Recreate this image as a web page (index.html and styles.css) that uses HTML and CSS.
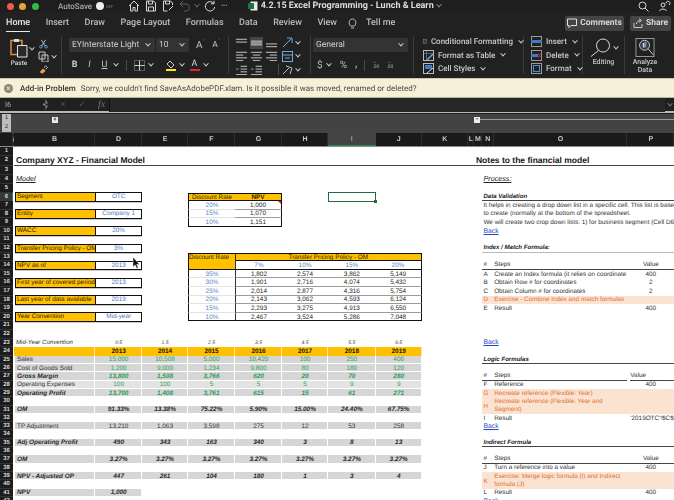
FILE: index.html
```html
<!DOCTYPE html>
<html>
<head>
  <meta charset="utf-8">
  <title>4.2.15 Excel Programming - Lunch &amp; Learn</title>
  <link rel="stylesheet" href="styles.css">
</head>
<body>
  <div class="titlebar">
    <span class="light red"></span><span class="light amber"></span><span class="light green"></span>
    <span class="autosave">AutoSave</span>
    <span class="toggle"><i></i>OFF</span>
    <svg class="qa" width="12" height="12" viewBox="0 0 12 12"><path d="M1 6l5-5 5 5M2.500 5v6h2.500V7.500h2V11h2.500V5" fill="none" stroke="#d8d8d8"/></svg>
    <svg class="qa" width="12" height="12" viewBox="0 0 12 12"><path d="M1.500 1h7l2 2v8h-9zM3.500 1v3h4V1M3.500 11V7h5v4" fill="none" stroke="#d8d8d8"/></svg>
    <svg class="qa" width="12" height="12" viewBox="0 0 12 12"><path d="M1.500 1h7l2 2v2M1.500 1v10h4M3.500 1v3h4V1M7 10l4-4" fill="none" stroke="#d8d8d8"/></svg>
    <svg class="qa" width="12" height="12" viewBox="0 0 12 12"><path d="M4 1L1 4l3 3M1 4h6a3.500 3.500 0 0 1 0 7H5" fill="none" stroke="#5c5c5c"/></svg>
    <span class="caret dim-caret"></span>
    <svg class="qa" width="12" height="12" viewBox="0 0 12 12"><path d="M9.800 3.500A4.700 4.700 0 1 0 10.700 7M10 .8v3H7" fill="none" stroke="#d8d8d8"/></svg>
    <span class="more">&#8226;&#8226;&#8226;</span>
    <svg class="xl" width="10" height="10" viewBox="0 0 10 10"><rect x="2.500" y=".5" width="7" height="9" fill="#e8f0ea"/><rect y="2" width="6" height="6" rx=".5" fill="#1f7244"/></svg>
    <span class="doc">4.2.15 Excel Programming - Lunch &amp; Learn</span>
    <span class="caret doc-caret"></span>
    <svg class="search" width="11" height="11" viewBox="0 0 11 11"><circle cx="4.500" cy="4.500" r="3.500" fill="none" stroke="#d8d8d8"/><path d="M7 7l3.500 3.500" stroke="#d8d8d8"/></svg>
    <svg class="person" width="12" height="12" viewBox="0 0 12 12"><circle cx="4" cy="5" r="2" fill="none" stroke="#d8d8d8"/><path d="M.5 11c.5-2.500 6.500-2.500 7 0M7 3.500a2 2 0 1 1 3 1.500" fill="none" stroke="#d8d8d8"/></svg>
  </div>

  <div class="tabs">
    <span class="tab on">Home</span>
    <span class="tab">Insert</span>
    <span class="tab">Draw</span>
    <span class="tab">Page Layout</span>
    <span class="tab">Formulas</span>
    <span class="tab">Data</span>
    <span class="tab">Review</span>
    <span class="tab">View</span>
    <svg class="bulb" width="9" height="11" viewBox="0 0 9 11"><path d="M2.500 8C.5 6 .5 1 4.500 1s4 5 2 7zM3 10h3" fill="none" stroke="#bbb"/></svg>
    <span class="tab tell">Tell me</span>
    <span class="btn comments">
      <svg width="10" height="10" viewBox="0 0 10 10"><path d="M.5 1h9v6.500H4L2 9.500v-2H.5z" fill="none" stroke="#e0e0e0"/></svg>Comments
    </span>
    <span class="btn share">
      <svg width="10" height="10" viewBox="0 0 10 10"><path d="M1 5v4.500h8V6M3.500 6c0-2.500 2-3.500 4-3.500M6 .5l2.500 2L6 4.500" fill="none" stroke="#c8c8c8"/></svg>Share
    </span>
  </div>

  <div class="ribbon">
    <div class="group clip">
      <div class="paste">
        <svg width="18" height="20" viewBox="0 0 18 20"><path d="M1 2.500h11v14H1z" fill="none" stroke="#e08a3c" stroke-width="1.500"/><path d="M4 1h5v3H4z" fill="#d9d9d9"/><path d="M7.500 7.500h9.500v11.500H7.500z" fill="#2a2a2a" stroke="#e5e5e5"/></svg>
        <span>Paste</span>
      </div>
      <span class="caret paste-caret"></span>
      <div class="clip-tools">
        <svg width="11" height="11" viewBox="0 0 11 11"><circle cx="2.500" cy="9" r="1.500" fill="none" stroke="#6fa8dc"/><circle cx="8.500" cy="9" r="1.500" fill="none" stroke="#6fa8dc"/><path d="M3.500 8L8 1M7.500 8L3 1" stroke="#cfcfcf" fill="none"/></svg>
        <div class="tool-line">
          <svg width="11" height="11" viewBox="0 0 11 11"><path d="M1 1h6v7H1zM4 4h6v7H4z" fill="#262626" stroke="#c8c8c8"/></svg>
          <span class="caret"></span>
        </div>
        <svg width="11" height="11" viewBox="0 0 11 11"><path d="M1 8l4-4 3 3-4 3z" fill="#e9a23b"/><path d="M6 3l2-2 2 2-2 2" fill="none" stroke="#ddd"/></svg>
      </div>
    </div>

    <div class="group font">
      <div class="line">
        <span class="select font-name">EYInterstate Light<span class="caret"></span></span>
        <span class="select font-size">10<span class="caret"></span></span>
        <span class="grow">A<sup>&#710;</sup></span>
        <span class="grow small">A<sup>&#711;</sup></span>
      </div>
      <div class="line low">
        <b class="fmt">B</b>
        <i class="fmt">I</i>
        <u class="fmt">U</u>
        <span class="caret"></span>
        <span class="vsep"></span>
        <svg width="11" height="11" viewBox="0 0 11 11"><path d="M.5.5h10v10H.5z" fill="none" stroke="#8f8f8f" stroke-dasharray="1 1"/><path d="M.5 5.500h10M5.500.5v10" stroke="#cfcfcf"/></svg>
        <span class="caret"></span>
        <span class="swatch fill">
          <svg width="10" height="8" viewBox="0 0 10 8"><path d="M1 4l3-3 4 4-3 3z" fill="none" stroke="#cfcfcf"/></svg>
          <i class="bar yellow"></i>
        </span>
        <span class="caret"></span>
        <span class="swatch letter">A<i class="bar redbar"></i></span>
        <span class="caret"></span>
      </div>
    </div>

    <div class="group align">
      <div class="align-grid">
        <svg class="al" viewBox="0 0 14 10"><path d="M1 1h12M1 4h12" stroke="#cfcfcf"/></svg>
        <span class="al sel"><svg viewBox="0 0 14 10"><path d="M1 3h12M1 5h12M1 7h12" stroke="#dedede"/></svg></span>
        <svg class="al" viewBox="0 0 14 10"><path d="M1 6h12M1 9h12" stroke="#cfcfcf"/></svg>
        <span class="al-end"><svg width="11" height="11" viewBox="0 0 11 11"><path d="M1 10l8-8M5 1h5v5" fill="none" stroke="#6fa8dc"/></svg><span class="caret"></span></span>
        <svg class="al" viewBox="0 0 14 10"><path d="M1 1h12M1 4h8M1 7h12M1 10h8" stroke="#cfcfcf"/></svg>
        <svg class="al" viewBox="0 0 14 10"><path d="M1 1h12M3 4h8M1 7h12M3 10h8" stroke="#cfcfcf"/></svg>
        <svg class="al" viewBox="0 0 14 10"><path d="M1 1h12M5 4h8M1 7h12M5 10h8" stroke="#cfcfcf"/></svg>
        <span class="al-end"><svg width="11" height="11" viewBox="0 0 11 11"><rect x=".5" y=".5" width="10" height="10" fill="none" stroke="#6fa8dc"/><path d="M.5 4h10M3 7h5" stroke="#6fa8dc"/></svg><span class="caret"></span></span>
        <svg class="al" viewBox="0 0 14 10"><path d="M6 1h7M6 4h7M6 7h7M1 10h12" stroke="#cfcfcf"/><path d="M4 4H1" stroke="#6fa8dc"/></svg>
        <svg class="al" viewBox="0 0 14 10"><path d="M6 1h7M6 4h7M6 7h7M1 10h12" stroke="#cfcfcf"/><path d="M1 4h3" stroke="#6fa8dc"/></svg>
        <span class="vsep wide"></span>
        <span class="al-end"><svg width="11" height="11" viewBox="0 0 11 11"><path d="M1 10l6-6M4 2l6 2-2 6" fill="none" stroke="#bdbdbd"/></svg><span class="caret"></span></span>
      </div>
    </div>

    <div class="group number">
      <span class="select general">General<span class="caret"></span></span>
      <div class="line low num-tools">
        <span class="sym">$</span><span class="caret"></span>
        <span class="sym pct">%</span>
        <b class="sym comma">,</b>
        <span class="vsep"></span>
        <span class="dec"><em>&#8592;</em>.00</span>
        <span class="dec"><em>&#8594;</em>.00</span>
      </div>
    </div>

    <div class="group stack styles">
      <div class="cmd">
        <svg width="11" height="11" viewBox="0 0 11 11"><rect x=".5" y=".5" width="10" height="10" fill="none" stroke="#b9b9b9"/><path d="M3.500 1v9M7.500 1v9" stroke="#8a8a8a" stroke-width=".6"/><path d="M4 2h3v2H4zM4 7h3v2H4z" fill="#d0282c"/></svg>
        <span>Conditional Formatting</span><span class="caret"></span>
      </div>
      <div class="cmd">
        <svg width="11" height="11" viewBox="0 0 11 11"><rect x=".5" y=".5" width="10" height="10" fill="none" stroke="#b9b9b9"/><path d="M.5 3.500h10M3.500 1v9" stroke="#8a8a8a" stroke-width=".6"/><path d="M4 10l6-6" stroke="#6fa8dc" stroke-width="1.500"/></svg>
        <span>Format as Table</span><span class="caret"></span>
      </div>
      <div class="cmd">
        <svg width="11" height="11" viewBox="0 0 11 11"><rect x=".5" y=".5" width="10" height="10" fill="none" stroke="#b9b9b9"/><path d="M2 2h7v4H2z" fill="#3d7cc4"/><path d="M4 10l6-5" stroke="#dcdcdc"/></svg>
        <span>Cell Styles</span><span class="caret"></span>
      </div>
    </div>

    <div class="group stack cells">
      <div class="cmd">
        <svg width="11" height="11" viewBox="0 0 11 11"><rect x=".5" y=".5" width="10" height="10" fill="none" stroke="#9a9a9a"/><path d="M0 4h11v3H0z" fill="#3d7cc4"/></svg>
        <span>Insert</span><span class="caret"></span>
      </div>
      <div class="cmd">
        <svg width="11" height="11" viewBox="0 0 11 11"><rect x=".5" y=".5" width="10" height="10" fill="none" stroke="#9a9a9a"/><path d="M0 4h7v3H0z" fill="#3d7cc4"/><path d="M7 3.500l3 4M10 3.500l-3 4" stroke="#d0282c"/></svg>
        <span>Delete</span><span class="caret"></span>
      </div>
      <div class="cmd">
        <svg width="11" height="11" viewBox="0 0 11 11"><rect x=".5" y=".5" width="10" height="10" fill="none" stroke="#9a9a9a"/><rect x="2.500" y="2.500" width="6" height="6" fill="none" stroke="#4c8fd8"/></svg>
        <span>Format</span><span class="caret"></span>
      </div>
    </div>

    <div class="group big editing">
      <div class="line">
        <svg width="21" height="19" viewBox="0 0 21 19"><circle cx="13" cy="7.500" r="6.500" fill="none" stroke="#dcdcdc"/><path d="M8.500 12.500L1 18.500" stroke="#dcdcdc"/></svg>
        <span class="caret"></span>
      </div>
      <span>Editing</span>
    </div>

    <div class="group big analyze">
      <svg width="20" height="20" viewBox="0 0 21 21"><rect x=".5" y=".5" width="20" height="20" fill="none" stroke="#a0a0a0"/><circle cx="10" cy="8" r="5.500" fill="#3a3a3a" stroke="#d5d5d5"/><path d="M8 5.500h2v5H8z" fill="#d8d8d8"/><path d="M10 4h2v6.500h-2z" fill="#5b8fd0"/><path d="M14 12l6 7" stroke="#d5d5d5"/></svg>
      <span>Analyze<br>Data</span>
    </div>
  </div>

  <div class="msgbar">
    <span class="msg-x">&#215;</span>
    <b>Add-in Problem</b>
    <span>Sorry, we couldn't find SaveAsAdobePDF.xlam. Is it possible it was moved, renamed or deleted?</span>
  </div>

  <div class="formula">
    <span class="name">I6</span>
    <span class="stepper"></span>
    <span class="fx-x">&#215;</span>
    <span class="fx-x">&#10003;</span>
    <em class="fx">fx</em>
    <span class="fx-input"></span>
    <span class="caret fx-caret"></span>
  </div>

  <div class="outline">
    <div class="levels"><span>1</span><span>2</span></div>
    <span class="outline-btn plus">+</span>
    <span class="outline-btn minus">&#8722;</span>
    <span class="outline-rule"></span>
  </div>

  <div class="colhead">
    <span class="corner"></span>
    <span class="ca">/</span>
    <span>B</span><span>D</span><span>E</span><span>F</span><span>G</span><span>H</span>
    <span class="cur">I</span>
    <span>J</span><span>K</span><span>L</span><span>M</span><span>N</span><span>O</span><span>P</span>
  </div>

  <div class="sheet">
    <div class="row r1"><span class="rh">1</span></div>

    <div class="row r2 ruled">
      <span class="rh">2</span>
      <span class="cell b heading">Company XYZ - Financial Model</span>
      <span class="cell m heading">Notes to the financial model</span>
    </div>

    <div class="row r3"><span class="rh">3</span></div>

    <div class="row r3">
      <span class="rh">4</span>
      <span class="cell b section">Model</span>
      <span class="cell n section">Process:</span>
    </div>

    <div class="row r3"><span class="rh">5</span></div>

    <div class="row">
      <span class="rh on">6</span>
      <span class="cell b lab">Segment</span><span class="cell d val">OTC</span>
      <span class="cell f tophead first">Discount Rate</span><span class="cell g tophead last">NPV</span>
      <span class="cell i selected"></span>
      <span class="cell n sub">Data Validation</span>
    </div>

    <div class="row">
      <span class="rh">7</span>
      <span class="cell f rate first">20%</span><span class="cell g num last flagged">1,000</span>
      <span class="cell n note">It helps in creating a drop down list in a specific cell. This list is based</span>
    </div>

    <div class="row">
      <span class="rh">8</span>
      <span class="cell b lab">Entity</span><span class="cell d val">Company 1</span>
      <span class="cell f rate first">15%</span><span class="cell g num last">1,070</span>
      <span class="cell n note">to create (normally at the bottom of the spreadsheet.</span>
    </div>

    <div class="row">
      <span class="rh">9</span>
      <span class="cell f rate first end">10%</span><span class="cell g num last end">1,151</span>
      <span class="cell n note">We will create two crop down lists: 1) for business segment (Cell D6)</span>
    </div>

    <div class="row">
      <span class="rh">10</span>
      <span class="cell b lab">WACC</span><span class="cell d val">20%</span>
      <span class="cell n link">Back</span>
    </div>

    <div class="row"><span class="rh">11</span></div>

    <div class="row">
      <span class="rh">12</span>
      <span class="cell b lab">Transfer Pricing Policy - OM</span><span class="cell d val">3%</span>
      <span class="cell n sub soft">Index / Match Formula:</span>
    </div>

    <div class="row">
      <span class="rh">13</span>
      <span class="cell f yel first topline">Discount Rate</span>
      <span class="cell gj yel center topline last sep-left underline">Transfer Pricing Policy - OM</span>
    </div>

    <div class="row">
      <span class="rh">14</span>
      <span class="cell b lab">NPV as of</span><span class="cell d val">2013</span>
      <span class="cell f yel first underline"></span>
      <span class="cell g rate underline sep-left">7%</span><span class="cell h rate underline">10%</span><span class="cell i rate underline">15%</span><span class="cell j rate underline last">20%</span>
      <span class="cell n steps">#</span><span class="cell o steps">Steps</span><span class="cell p steps center">Value</span>
    </div>

    <div class="row">
      <span class="rh">15</span>
      <span class="cell f rate first">35%</span>
      <span class="cell g num sep-left">1,802</span><span class="cell h num">2,574</span><span class="cell i num">3,862</span><span class="cell j num last">5,149</span>
      <span class="cell n note">A</span><span class="cell o note">Create an Index formula (it relies on coordinate</span><span class="cell p note center">400</span>
    </div>

    <div class="row">
      <span class="rh">16</span>
      <span class="cell b lab">First year of covered period</span><span class="cell d val">2013</span>
      <span class="cell f rate first">30%</span>
      <span class="cell g num sep-left">1,901</span><span class="cell h num">2,716</span><span class="cell i num">4,074</span><span class="cell j num last">5,432</span>
      <span class="cell n note">B</span><span class="cell o note">Obtain Row # for coordinates</span><span class="cell p note center">2</span>
    </div>

    <div class="row">
      <span class="rh">17</span>
      <span class="cell f rate first">25%</span>
      <span class="cell g num sep-left">2,014</span><span class="cell h num">2,877</span><span class="cell i num">4,316</span><span class="cell j num last">5,754</span>
      <span class="cell n note">C</span><span class="cell o note">Obtain Column # for coordinates</span><span class="cell p note center">2</span>
    </div>

    <div class="row">
      <span class="rh">18</span>
      <span class="cell b lab">Last year of data available</span><span class="cell d val">2019</span>
      <span class="cell f rate first">20%</span>
      <span class="cell g num sep-left">2,143</span><span class="cell h num">3,062</span><span class="cell i num">4,593</span><span class="cell j num last">6,124</span>
      <span class="cell n task">D</span><span class="cell o task">Exercise - Combine Index and match formulas</span>
    </div>

    <div class="row">
      <span class="rh">19</span>
      <span class="cell f rate first">15%</span>
      <span class="cell g num sep-left">2,293</span><span class="cell h num">3,275</span><span class="cell i num">4,913</span><span class="cell j num last">6,550</span>
      <span class="cell n note">E</span><span class="cell o note">Result</span><span class="cell p note center">400</span>
    </div>

    <div class="row">
      <span class="rh">20</span>
      <span class="cell b lab">Year Convention</span><span class="cell d val">Mid-year</span>
      <span class="cell f rate first end">10%</span>
      <span class="cell g num end sep-left">2,467</span><span class="cell h num end">3,524</span><span class="cell i num end">5,286</span><span class="cell j num last end">7,048</span>
    </div>

    <div class="row"><span class="rh">21</span></div>
    <div class="row"><span class="rh">22</span></div>

    <div class="row">
      <span class="rh">23</span>
      <span class="cell b tiny wide-tiny">Mid-Year Convention</span>
      <span class="cell d tiny center">0.5</span><span class="cell e tiny center">1.5</span><span class="cell f tiny center">2.5</span><span class="cell g tiny center">3.5</span><span class="cell h tiny center">4.5</span><span class="cell i tiny center">5.5</span><span class="cell j tiny center">6.5</span>
      <span class="cell n link">Back</span>
    </div>

    <div class="row">
      <span class="rh">24</span>
      <span class="cell b year"></span>
      <span class="cell d year">2013</span><span class="cell e year">2014</span><span class="cell f year">2015</span><span class="cell g year">2016</span><span class="cell h year">2017</span><span class="cell i year">2018</span><span class="cell j year">2019</span>
    </div>

    <div class="row lo">
      <span class="rh">25</span>
      <span class="cell b grey">Sales</span>
      <span class="cell d grey in">15,000</span><span class="cell e grey in">10,508</span><span class="cell f grey in">5,000</span><span class="cell g grey in">10,420</span><span class="cell h grey in">100</span><span class="cell i grey in">250</span><span class="cell j grey in">400</span>
      <span class="cell n sub">Logic Formulas</span>
    </div>

    <div class="row lo">
      <span class="rh">26</span>
      <span class="cell b grey">Cost of Goods Sold</span>
      <span class="cell d grey in">1,200</span><span class="cell e grey in">9,000</span><span class="cell f grey in">1,234</span><span class="cell g grey in">9,800</span><span class="cell h grey in">80</span><span class="cell i grey in">180</span><span class="cell j grey in">120</span>
    </div>

    <div class="row lo">
      <span class="rh">27</span>
      <span class="cell b grey total">Gross Margin</span>
      <span class="cell d grey in total">13,800</span><span class="cell e grey in total">1,508</span><span class="cell f grey in total">3,766</span><span class="cell g grey in total">620</span><span class="cell h grey in total">20</span><span class="cell i grey in total">70</span><span class="cell j grey in total">280</span>
      <span class="cell n steps">#</span><span class="cell o steps">Steps</span><span class="cell p steps off-left">Value</span>
    </div>

    <div class="row lo">
      <span class="rh">28</span>
      <span class="cell b pale">Operating Expenses</span>
      <span class="cell d pale in">100</span><span class="cell e pale in">100</span><span class="cell f pale in">5</span><span class="cell g pale in">5</span><span class="cell h pale in">5</span><span class="cell i pale in">9</span><span class="cell j pale in">9</span>
      <span class="cell n note">F</span><span class="cell o note">Reference</span><span class="cell p note center">400</span>
    </div>

    <div class="row lo">
      <span class="rh">29</span>
      <span class="cell b grey total">Operating Profit</span>
      <span class="cell d grey in total">13,700</span><span class="cell e grey in total">1,408</span><span class="cell f grey in total">3,761</span><span class="cell g grey in total">615</span><span class="cell h grey in total">15</span><span class="cell i grey in total">61</span><span class="cell j grey in total">271</span>
      <span class="cell n task">G</span><span class="cell o task">Recreate reference (Flexible: Year)</span>
    </div>

    <div class="row lo">
      <span class="rh">30</span>
      <span class="cell n task"></span><span class="cell o task">Recreate reference (Flexible: Year and</span>
    </div>

    <div class="row lo">
      <span class="rh">31</span>
      <span class="cell b grey total">OM</span>
      <span class="cell d grey total">91.33%</span><span class="cell e grey total">13.38%</span><span class="cell f grey total">75.22%</span><span class="cell g grey total">5.90%</span><span class="cell h grey total">15.00%</span><span class="cell i grey total">24.40%</span><span class="cell j grey total">67.75%</span>
      <span class="cell n task merged">H</span><span class="cell o task">Segment)</span>
    </div>

    <div class="row lo">
      <span class="rh">32</span>
      <span class="cell n note">I</span><span class="cell o note">Result</span><span class="cell p note clip-ref">'2019OTC'!$C$8</span>
    </div>

    <div class="row lo">
      <span class="rh">33</span>
      <span class="cell b grey plain">TP Adjustment</span>
      <span class="cell d grey plain">13,210</span><span class="cell e grey plain">1,063</span><span class="cell f grey plain">3,598</span><span class="cell g grey plain">275</span><span class="cell h grey plain">12</span><span class="cell i grey plain">53</span><span class="cell j grey plain">258</span>
      <span class="cell n link">Back</span>
    </div>

    <div class="row lo"><span class="rh">34</span></div>

    <div class="row lo">
      <span class="rh">35</span>
      <span class="cell b grey total">Adj Operating Profit</span>
      <span class="cell d grey total">490</span><span class="cell e grey total">343</span><span class="cell f grey total">163</span><span class="cell g grey total">340</span><span class="cell h grey total">3</span><span class="cell i grey total">8</span><span class="cell j grey total">13</span>
      <span class="cell n sub">Indirect Formula</span>
    </div>

    <div class="row lo"><span class="rh">36</span></div>

    <div class="row lo">
      <span class="rh">37</span>
      <span class="cell b grey total">OM</span>
      <span class="cell d grey total">3.27%</span><span class="cell e grey total">3.27%</span><span class="cell f grey total">3.27%</span><span class="cell g grey total">3.27%</span><span class="cell h grey total">3.27%</span><span class="cell i grey total">3.27%</span><span class="cell j grey total">3.27%</span>
      <span class="cell n steps">#</span><span class="cell o steps">Steps</span><span class="cell p steps center">Value</span>
    </div>

    <div class="row lo">
      <span class="rh">38</span>
      <span class="cell n note">J</span><span class="cell o note">Turn a reference into a value</span><span class="cell p note center">400</span>
    </div>

    <div class="row lo">
      <span class="rh">39</span>
      <span class="cell b grey total">NPV - Adjusted OP</span>
      <span class="cell d grey total">447</span><span class="cell e grey total">261</span><span class="cell f grey total">104</span><span class="cell g grey total">180</span><span class="cell h grey total">1</span><span class="cell i grey total">3</span><span class="cell j grey total">4</span>
      <span class="cell n task"></span><span class="cell o task">Exercise: Merge logic formula (I) and Indirect</span>
    </div>

    <div class="row lo">
      <span class="rh">40</span>
      <span class="cell n task merged">K</span><span class="cell o task">formula (J)</span>
    </div>

    <div class="row lo">
      <span class="rh">41</span>
      <span class="cell b grey total">NPV</span><span class="cell d grey total">1,000</span>
      <span class="cell n note">L</span><span class="cell o note">Result</span><span class="cell p note center">400</span>
    </div>

    <div class="row lo">
      <span class="rh">42</span>
      <span class="cell n link">Back</span>
    </div>

    <svg class="pointer" width="8" height="12" viewBox="0 0 8 12"><path d="M1 0v10l2.200-2 1.500 3.500 1.500-.7-1.500-3.300H7.500z" fill="#111" stroke="#fff" stroke-width=".5"/></svg>
  </div>
</body>
</html>
```

FILE: styles.css
```css
* {
  box-sizing: border-box;
}
html, body {
  margin: 0;
  height: 500px;
  overflow: hidden;
}
body {
  width: 674px;
  background: #212121;
  color: #d8d8d8;
  font-family: Roboto, sans-serif;
  font-size: 8px;
  text-rendering: geometricPrecision;
  filter: blur(.3px);
}

/* title bar */
.titlebar {
  height: 12px;
  display: flex;
  align-items: center;
  padding-left: 6.500px;
  background: #1e1e1e;
}
.light {
  width: 7px;
  height: 7px;
  border-radius: 50%;
  margin-right: 5.500px;
}
.red { background: #ec5a50; }
.amber { background: #e8a52e; }
.green { background: #35b94a; }
.autosave {
  margin-left: 14px;
  font-size: 8px;
  font-weight: 500;
  color: #a9a9a9;
}
.toggle {
  display: flex;
  align-items: center;
  gap: 2px;
  margin-left: 4px;
  width: 20px;
  font-size: 4px;
  color: #888;
}
.toggle i {
  width: 8px;
  height: 8px;
  border-radius: 50%;
  background: #eee;
}
.qa {
  margin-left: 5px;
}
.toggle + .qa {
  margin-left: 12px;
}
.dim-caret {
  margin-left: 4px;
  opacity: .4;
}
.more {
  margin-left: 5px;
  font-size: 5px;
  letter-spacing: .5px;
}
.xl {
  margin-left: 20px;
}
.doc {
  margin-left: 3px;
  font-size: 9px;
  font-weight: 700;
  color: #dcdcdc;
  white-space: nowrap;
}
.doc-caret {
  margin-left: 3px;
  opacity: .6;
}
.search {
  margin-left: auto;
}
.person {
  margin: 0 3px 0 10px;
}

/* carets are small rotated corners */
.caret {
  display: inline-block;
  flex: none;
  width: 4px;
  height: 4px;
  border-right: 1px solid #d0d0d0;
  border-bottom: 1px solid #d0d0d0;
  transform: rotate(45deg) translate(-1px, -1px);
}

/* tabs */
.tabs {
  height: 22px;
  display: flex;
  align-items: center;
  padding-left: 6px;
  gap: 15.500px;
}
.tab {
  font-size: 9px;
  font-weight: 500;
  color: #bcbcbc;
  padding: 3px 0;
  white-space: nowrap;
}
.tab.on {
  color: #e8e8e8;
  border-bottom: 1px solid #e8e8e8;
}
.bulb {
  margin: 0 -7px 0 -4px;
}
.btn {
  display: flex;
  align-items: center;
  justify-content: center;
  gap: 3px;
  height: 15px;
  font-weight: 700;
  font-size: 8.500px;
  border-radius: 2px;
  background: #444;
  color: #d5d5d5;
}
.comments {
  width: 59px;
  margin-left: auto;
  margin-right: -9.500px;
}
.share {
  width: 41px;
  margin-right: 3px;
}

/* ribbon */
.ribbon {
  height: 44px;
  display: flex;
  padding-top: 2px;
}
.group {
  height: 38px;
  border-right: 1px solid #3c3c3c;
}
.line {
  display: flex;
  align-items: center;
}
.line.low {
  height: 14px;
  margin-top: 6px;
  gap: 4px;
}
.select {
  display: flex;
  align-items: center;
  justify-content: space-between;
  height: 14px;
  padding: 0 5px 0 3px;
  background: #333;
  border-radius: 1px;
  font-size: 8.500px;
  color: #cfcfcf;
  white-space: nowrap;
}
.vsep {
  width: 1px;
  height: 11px;
  margin: 0 3px;
  background: #4a4a4a;
}

.clip {
  width: 62px;
  padding: 2px 0 0 9px;
  display: flex;
}
.paste {
  width: 20px;
  text-align: center;
  font-size: 6.500px;
  font-weight: 500;
  line-height: 8px;
  display: flex;
  flex-direction: column;
  align-items: center;
}
.paste span {
  margin-top: 1px;
}
.paste-caret {
  margin: 9px 0 0 1px;
}
.clip-tools {
  margin: 1px 0 0 4px;
  display: flex;
  flex-direction: column;
  align-items: flex-start;
  gap: 2.500px;
}
.tool-line {
  display: flex;
  align-items: center;
  gap: 3px;
}

.font {
  width: 167px;
  padding: 2px 0 0 7px;
}
.font-name {
  width: 86px;
  margin-right: 1px;
}
.font-size {
  width: 33px;
}
.grow {
  margin-left: 7px;
  font-size: 10px;
  color: #c4c4c4;
}
.grow sup {
  font-size: 6px;
  line-height: 0;
  color: #6fa8dc;
}
.grow.small {
  font-size: 8.500px;
}
.fmt {
  width: 11px;
  text-align: center;
  font-size: 9px;
  color: #c8c8c8;
}
.line.low .caret {
  margin-right: 1px;
}
.swatch {
  display: flex;
  flex-direction: column;
  align-items: center;
  width: 11px;
  gap: 1px;
}
.swatch.fill {
  margin-left: 7px;
}
.swatch.letter {
  font-size: 9px;
  line-height: 9px;
  gap: 0;
}
.bar {
  width: 10px;
  height: 2px;
}
.yellow { background: #fce90c; }
.redbar { background: #e8232a; }

.align {
  width: 82px;
  padding-left: 6px;
}
.align-grid {
  display: grid;
  grid-template-columns: 14px 14px 14px 22px;
  grid-auto-rows: 13.500px;
  column-gap: 1px;
  align-items: center;
}
.al {
  width: 13px;
  height: 10px;
}
.al.sel {
  height: 12px;
  display: flex;
  align-items: center;
  background: #454545;
}
.al.sel svg {
  width: 13px;
  height: 10px;
}
.al-end {
  display: flex;
  align-items: center;
  gap: 3px;
  padding-left: 2px;
}
.vsep.wide {
  justify-self: end;
  margin: 0;
}

.number {
  width: 103px;
  padding: 2px 0 0 2px;
}
.general {
  width: 95px;
}
.num-tools {
  gap: 5px;
  padding-left: 4px;
}
.sym {
  font-size: 10px;
  color: #b8b8b8;
}
.pct {
  margin-left: 4px;
}
.comma {
  margin-left: 4px;
  line-height: 6px;
}
.dec {
  font-size: 5px;
  display: flex;
  flex-direction: column;
  line-height: 5px;
  color: #a9a9a9;
}
.dec em {
  font-style: normal;
  color: #6fa8dc;
}
.dec + .dec {
  margin-left: 3px;
}

.stack {
  display: flex;
  flex-direction: column;
  gap: 2.700px;
}
.styles {
  width: 110px;
  padding-left: 9px;
}
.cells {
  width: 59px;
  padding-left: 7px;
}
.cmd {
  display: flex;
  align-items: center;
  gap: 4px;
  height: 11px;
  font-size: 8px;
  font-weight: 500;
  color: #c8c8c8;
  white-space: nowrap;
}
.cmd .caret {
  margin-left: 2px;
}
.big {
  display: flex;
  flex-direction: column;
  align-items: center;
  text-align: center;
  font-size: 7px;
  font-weight: 500;
  line-height: 8px;
  color: #c8c8c8;
}
.editing {
  width: 42px;
  gap: 1px;
  padding-top: 2px;
}
.editing .caret {
  margin-left: 3px;
}
.analyze {
  width: 40px;
  gap: 1px;
  padding-top: 2px;
  border-right: 0;
}

/* add-in message */
.msgbar {
  height: 20px;
  display: flex;
  align-items: center;
  gap: 5px;
  padding-left: 4px;
  background: #f8efd9;
  border-top: 1px solid #cfc8b4;
  border-bottom: 1px solid #b7b2a4;
  color: #4a4a46;
  font-size: 8px;
  white-space: nowrap;
}
.msgbar b {
  font-weight: 500;
  color: #33332f;
}
.msg-x {
  width: 9px;
  height: 9px;
  margin-right: 2px;
  border-radius: 50%;
  background: #8f8872;
  color: #f8efd9;
  text-align: center;
  line-height: 9px;
  font-size: 8px;
}

/* formula bar */
.formula {
  height: 15px;
  display: flex;
  align-items: center;
  padding-left: 5px;
  background: #202020;
  border-bottom: 2px solid #b9b9b9;
}
.name {
  width: 38px;
  font-size: 7.500px;
  color: #aaa;
}
.stepper {
  width: 5px;
  height: 11px;
  background: #8a8a8a;
  clip-path: polygon(50% 0, 100% 40%, 0 40%, 0 60%, 100% 60%, 50% 100%);
}
.fx-x {
  margin-left: 11px;
  width: 8px;
  text-align: center;
  color: #555;
  font-size: 9px;
}
.fx {
  margin-left: 12px;
  font-family: "Liberation Serif", serif;
  font-size: 10px;
  color: #777;
}
.fx-input {
  flex: 1;
  height: 14px;
  margin-left: 4px;
  background: #262626;
  border-left: 1px solid #111;
}
.fx-caret {
  margin: 0 2px 0 3px;
  opacity: .5;
}

/* outline strip */
.outline {
  height: 20px;
  position: relative;
  background: #434343;
  border-top: 1px solid #1f1f1f;
}
.levels {
  width: 9px;
  margin-left: 2px;
  background: #bdbdbd;
  color: #222;
  font-size: 5.500px;
  line-height: 9px;
  text-align: center;
  font-family: "Liberation Sans", sans-serif;
}
.levels span {
  display: block;
}
.outline-btn {
  position: absolute;
  top: 3px;
  width: 6px;
  height: 6px;
  background: #eee;
  color: #222;
  line-height: 6px;
  font-size: 6px;
  font-weight: 700;
  text-align: center;
}
.plus { left: 52px; }
.minus { left: 474px; }
.outline-rule {
  position: absolute;
  top: 5px;
  left: 480px;
  right: 0;
  height: 1px;
  background: #9a9a9a;
}

/* shared column template for header and sheet */
.colhead, .row {
  display: grid;
  grid-template-columns: 13px 1px 81.300px 46.700px 46px 47px 47px 46px 47.700px 46px 46.300px 6px 8px 11.700px 133.700px 47px;
  grid-template-rows: 100%;
}
.colhead {
  height: 14px;
  background: #1a1a1a;
  color: #c9c9c9;
  font-size: 7px;
  font-weight: 600;
  font-family: "Liberation Sans", sans-serif;
  line-height: 14px;
  text-align: center;
  border-bottom: 1px solid #8a8a8a;
}
.colhead span {
  box-shadow: inset -1px 0 0 #2d2d2d;
  overflow: hidden;
}
.colhead .cur {
  background: #444;
  color: #999;
  box-shadow: inset 0 -1px 0 #2c8a55;
}

/* sheet */
.sheet {
  position: relative;
  height: 353px;
  background: #fff;
  color: #222;
  font-family: "Liberation Sans", sans-serif;
  font-size: 6.400px;
}
.row {
  height: 8.600px;
  line-height: 8.600px;
}
.r1 { height: 9px; }
.r2 { height: 9.500px; }
.r3 { height: 9px; }
.row.lo {
  height: 8.300px;
  line-height: 8.300px;
}
.rh {
  grid-column: 1;
  background: #1c1c1c;
  color: #d5d5d5;
  font-size: 6px;
  font-weight: 700;
  text-align: center;
  box-shadow: inset 0 -1px 0 #333;
}
.rh.on {
  background: #383838;
  box-shadow: inset -1px 0 0 #2c8a55;
}
.cell {
  grid-row: 1;
  white-space: nowrap;
  min-width: 0;
  padding-top: .7px;
}
.b { grid-column: 3; padding-left: 2px; }
.d { grid-column: 4; }
.e { grid-column: 5; }
.f { grid-column: 6; }
.g { grid-column: 7; }
.h { grid-column: 8; }
.i { grid-column: 9; }
.j { grid-column: 10; }
.m { grid-column: 13; padding-left: 2px; }
.n { grid-column: 14; padding-left: 1.500px; }
.o { grid-column: 15; padding-left: .5px; }
.p { grid-column: 16; }
.gj { grid-column: 7 / 11; }
.center { text-align: center; }

.ruled {
  background: linear-gradient(#444, #444) 14px 100% / 660px 1px no-repeat;
}
.heading {
  font-size: 8.500px;
  font-weight: 700;
  color: #161616;
  padding-top: 0;
}
.section {
  font-style: italic;
  text-decoration: underline;
  font-size: 7.200px;
}

/* input boxes */
.lab, .val {
  height: 9.600px;
  margin-top: -.5px;
  padding-top: 0;
  border: 1px solid #111;
  box-shadow: 0 1px 0 #c9c9c9;
  line-height: 8px;
}
.lab {
  background: #ffc000;
  border-right: 0;
  overflow: hidden;
  margin-left: 1px;
  padding-left: 1px;
  color: #2b2200;
}
.val {
  text-align: center;
  color: #4f7cc0;
}

/* small tables */
.tophead {
  background: #ffc000;
  border-top: 1px solid #111;
  border-bottom: 1px solid #111;
  padding-top: 0;
  line-height: 7px;
  text-align: center;
  color: #2b2200;
}
.tophead.last {
  font-weight: 700;
}
.rate {
  text-align: center;
  color: #5d84c4;
  border-bottom: 1px solid #e2e2e2;
}
.num {
  text-align: center;
  color: #2a2a2a;
  border-bottom: 1px solid #9c9c9c;
}
.first { border-left: 1px solid #111; }
.last { border-right: 1px solid #111; }
.end { border-bottom: 1px solid #111; }
.sep-left { border-left: 1px solid #333; }
.yel {
  background: #ffc000;
  color: #2b2200;
}
.topline {
  border-top: 1px solid #111;
  padding-top: 0;
  line-height: 7.500px;
}
.underline { border-bottom: 1px solid #111; }
.flagged {
  position: relative;
}
.flagged::after {
  content: "";
  position: absolute;
  top: 0;
  right: 0;
  border-top: 3px solid #d9201c;
  border-left: 3px solid transparent;
}
.selected {
  position: relative;
  border: 1px solid #1f6b41;
  height: 10px;
  margin-top: -.5px;
}
.selected::after {
  content: "";
  position: absolute;
  right: -2px;
  bottom: -2px;
  width: 3px;
  height: 3px;
  background: #1f6b41;
}

/* model */
.tiny {
  font-style: italic;
  font-size: 5px;
  color: #333;
}
.wide-tiny {
  font-size: 6.100px;
}
.year {
  background: #ffc000;
  box-shadow: inset -1px 0 0 #fbe6b0;
  text-align: center;
  font-weight: 700;
  color: #1c1600;
}
.grey, .pale {
  background: #d6d6d6;
  box-shadow: inset -1px 0 0 #fff, inset 0 -1px 0 #fff;
  text-align: center;
  color: #333;
}
.pale {
  background: #e3e3e3;
}
.b.grey, .b.pale {
  text-align: left;
  padding-left: 2px;
  margin-left: 1px;
}
.in {
  color: #2fa860;
}
.total {
  font-style: italic;
  font-weight: 700;
  color: #2a2a2a;
}
.in.total {
  color: #2a9c56;
}
.plain {
  color: #3a3a3a;
}

/* notes */
.sub {
  grid-column: 14 / 17;
  font-style: italic;
  font-weight: 700;
  font-size: 6.100px;
  padding-top: 0;
  color: #222;
  border-bottom: 1.500px solid #444;
}
.sub.soft {
  border-bottom-color: #bbb;
}
.note, .steps, .task {
  font-size: 6.350px;
  color: #333;
}
.steps {
  padding-top: 0;
  border-bottom: 1px solid #444;
}
.off-left {
  margin-left: 3px;
}
.task {
  background: #fbe3d2;
  color: #e0702c;
}
.cell.o.task {
  grid-column: 15 / 17;
}
.merged {
  line-height: 1px;
}
.link {
  font-size: 6.800px;
  color: #2047c8;
  text-decoration: underline;
}
.clip-ref {
  margin-left: 3px;
}

.pointer {
  position: absolute;
  left: 132px;
  top: 110px;
}
```
